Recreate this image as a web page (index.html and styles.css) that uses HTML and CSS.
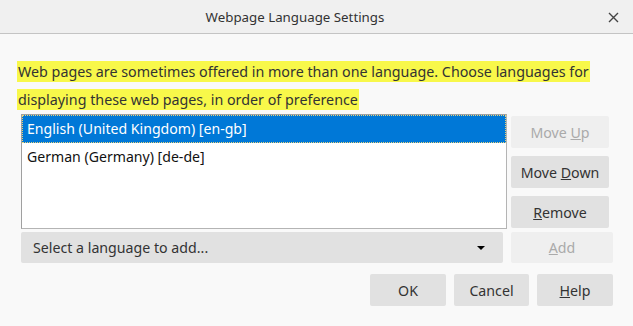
FILE: index.html
```html
<!DOCTYPE html>
<html>
    <head>
        <link rel="stylesheet" href="styles.css">
    </head>
    <body>
        <div class="titlebar">
            <span class="title">Webpage Language Settings</span>
            <svg class="close" width="11" height="11" viewBox="0 0 11 11">
                <path d="M1 1 L10 10 M10 1 L1 10" stroke="#444" stroke-width="1.4"/>
            </svg>
        </div>
        <div class="content">
            <p class="intro">
                <span class="mark">Web pages are sometimes offered in more than one language. Choose languages for</span><br>
                <span class="mark">displaying these web pages, in order of preference</span>
            </p>
            <div class="lang-grid">
                <div class="listbox">
                    <div class="row selected">English (United Kingdom) [en-gb]</div>
                    <div class="row">German (Germany) [de-de]</div>
                </div>
                <div class="side-buttons">
                    <button class="btn" disabled>Move <u>U</u>p</button>
                    <button class="btn">Move <u>D</u>own</button>
                    <button class="btn"><u>R</u>emove</button>
                </div>
                <div class="dropdown">
                    <span>Select a language to add...</span>
                    <span class="arrow"></span>
                </div>
                <button class="btn add" disabled><u>A</u>dd</button>
            </div>
            <div class="footer">
                <button class="btn">OK</button>
                <button class="btn">Cancel</button>
                <button class="btn"><u>H</u>elp</button>
            </div>
        </div>
    </body>
</html>
```

FILE: styles.css
```css
body {
    margin: 0;
    background-color: #f9f9f9;
    color: #333;
    font-family: "Noto Sans", "Open Sans", sans-serif;
    font-size: 14px;
}
.titlebar {
    height: 33px;
    background-color: #f0f0f0;
    border-bottom: 1px solid #c4c4c4;
    display: flex;
    align-items: center;
    justify-content: center;
    padding-right: 43px;
    position: relative;
}
.title {
    font-size: 13.3px;
    color: #333;
}
.close {
    position: absolute;
    right: 14px;
    top: 12px;
}
.content {
    padding: 24px 20px 0 21px;
}
.intro {
    margin: 0 0 0 -4px;
    line-height: 28px;
    font-size: 14.3px;
    white-space: nowrap;
}
.mark {
    background-color: #f8f84a;
    padding: 1px 1px;
}
.lang-grid {
    display: grid;
    grid-template-columns: 486px 102px;
    grid-template-rows: 115px 31px;
    column-gap: 4px;
    row-gap: 3px;
}
.listbox {
    background-color: #fff;
    border: 1px solid #a0a0a0;
    border-right-color: #b4b4b4;
    border-bottom-color: #b4b4b4;
}
.row {
    height: 28px;
    line-height: 28px;
    padding-left: 5px;
    font-size: 14.1px;
    color: #111;
}
.row.selected {
    background-color: #0078d7;
    color: #fff;
    outline: 1px dotted #e8d27a;
    outline-offset: -1px;
}
.side-buttons {
    display: flex;
    flex-direction: column;
    gap: 8px;
    padding-top: 2px;
}
.btn {
    height: 32px;
    border: none;
    border-radius: 2px;
    background-color: #e1e1e1;
    color: #333;
    font-family: inherit;
    font-size: 14.2px;
    padding: 0;
}
.side-buttons .btn {
    width: 98px;
}
.btn:disabled {
    background-color: #efefef;
    color: #aaa;
}
.dropdown {
    width: 482px;
    height: 31px;
    background-color: #e1e1e1;
    border-radius: 2px;
    display: flex;
    align-items: center;
    justify-content: space-between;
    padding: 0 18px 0 12px;
    box-sizing: border-box;
    font-size: 14.2px;
}
.arrow {
    width: 0;
    height: 0;
    border-left: 4px solid transparent;
    border-right: 4px solid transparent;
    border-top: 4px solid #000;
}
.add {
    height: 31px;
}
.footer {
    display: flex;
    justify-content: flex-end;
    gap: 8px;
    margin-top: 11px;
}
.footer .btn {
    width: 76px;
}
.footer .btn:nth-child(2) {
    width: 75px;
}
```
